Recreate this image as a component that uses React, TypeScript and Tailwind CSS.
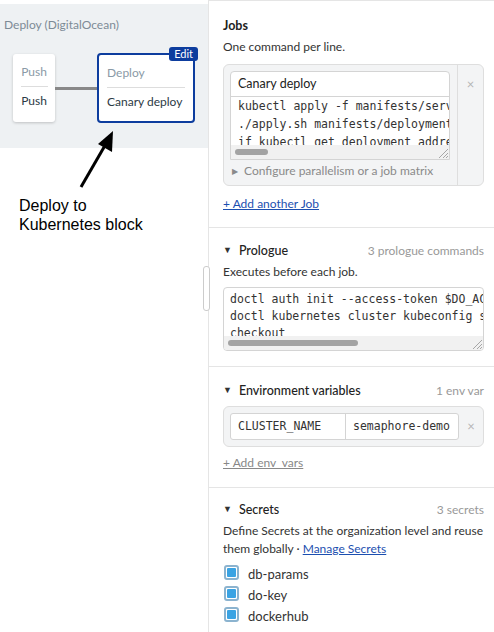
import React from "react";

const ui = "font-['Lato','Noto_Sans',sans-serif]";
const mono = "font-['DejaVu_Sans_Mono','Liberation_Mono',monospace]";

function ResizeGrip() {
  return (
    <svg
      className="absolute right-0 bottom-0"
      width="14"
      height="14"
      viewBox="0 0 14 14"
    >
      <path d="M13 4 L4 13 M13 8 L8 13 M13 11 L11 13" stroke="#a6a6a6" strokeWidth="1" />
    </svg>
  );
}

function FakeScroll({ thumb }: { thumb: string }) {
  return (
    <div className="absolute left-0 right-0 bottom-0 h-[14px] bg-[#f1f1f1]">
      <div className={`absolute left-[4px] top-[4px] h-[6px] rounded-full bg-[#a3a3a3] ${thumb}`} />
    </div>
  );
}

function Caret() {
  return <span className="text-[9px] text-[#333] mr-[7px] relative -top-[1px]">▼</span>;
}

function SectionHead({ title, count }: { title: string; count: string }) {
  return (
    <div className="flex items-center justify-between leading-[18px]">
      <div className="flex items-center text-[12.5px] text-[#222] font-medium">
        <Caret />
        {title}
      </div>
      <span className="text-[12px] text-[#999]">{count}</span>
    </div>
  );
}

function Checkbox({ label }: { label: string }) {
  return (
    <label className="flex items-center gap-[9px] h-[21px]">
      <span className="w-[15px] h-[15px] rounded-[3px] border-[2px] border-[#8bb3cf] bg-white flex items-center justify-center">
        <span className="w-[9px] h-[9px] bg-[#3aa3e3] rounded-[1px]" />
      </span>
      <span className="text-[13px] text-[#333] relative top-[2px]">{label}</span>
    </label>
  );
}

export default function App() {
  return (
    <div className={`${ui} relative flex h-[632px] w-[494px] overflow-hidden bg-white`}>
      {/* canvas */}
      <div className="w-[208px] shrink-0 relative">
        <div className="mt-[4px] h-[144px] bg-[#eef1f3] pl-[4px] pt-[12px]">
          <div className="text-[12px] text-[#7d8b96] leading-[18px]">Deploy (DigitalOcean)</div>
          <div className="flex items-center mt-[19px] ml-[9px]">
            <div className="w-[42px] h-[68px] bg-white rounded-[3px] shadow-[0_1px_3px_rgba(0,0,0,0.2)] flex flex-col items-center pt-[9px]">
              <span className="text-[12px] text-[#8a9aa6] leading-[18px]">Push</span>
              <span className="w-[27px] h-px bg-[#ddd] my-[5px]" />
              <span className="text-[12px] text-[#2b3a45] leading-[18px]">Push</span>
            </div>
            <div className="w-[42px] h-[3px] bg-[#888]" />
            <div className="relative w-[98px] h-[70px] border-[2px] border-[#0d3d9e] rounded-[4px] bg-white px-[8px] pt-[9px]">
              <span className="absolute -top-[8px] -right-[5px] bg-[#0d3d9e] text-white text-[11px] leading-[14px] px-[5px] rounded-[3px]">
                Edit
              </span>
              <div className="text-[12px] text-[#8a9aa6] leading-[18px]">Deploy</div>
              <div className="h-px bg-[#ddd] my-[5px]" />
              <div className="text-[12px] text-[#2b3a45] leading-[18px] whitespace-nowrap">Canary deploy</div>
            </div>
          </div>
        </div>
        <svg className="absolute left-[76px] top-[124px]" width="44" height="66" viewBox="0 0 44 66">
          <line x1="5" y1="63" x2="31" y2="18" stroke="#000" strokeWidth="3" />
          <polygon points="37,7 36,28 22,20" fill="#000" />
        </svg>
        <div className="mt-[48px] pl-[19px] font-['Liberation_Sans',Arial,sans-serif] text-[16px] leading-[19px] text-black">
          Deploy to
          <br />
          Kubernetes block
        </div>
      </div>

      {/* drag handle */}
      <div className="absolute left-[203px] top-[266px] w-[7px] h-[45px] rounded-[3px] border border-[#ccc] bg-white" />

      {/* editor */}
      <div className="flex-1 min-w-0 border-l border-[#e5e5e5] overflow-hidden">
        <div className="border-t border-[#e5e5e5] pl-[14px] pr-[10px] pt-[16px] pb-[14px]">
          <div className="text-[12.5px] font-bold text-[#222] leading-[18px]">Jobs</div>
          <div className="text-[12px] text-[#333] leading-[18px] mt-[3px]">One command per line.</div>
          <div className="mt-[8px] flex rounded-[6px] border border-[#dedede] bg-[#f3f4f5]">
            <div className="flex-1 min-w-0 pl-[6px] pr-[7px] pt-[6px] pb-[5px] border-r border-[#dedede]">
              <div className="rounded-t-[4px] border border-[#d4d4d4] bg-white">
                <div className="h-[25px] flex items-center px-[7px] text-[12.5px] text-[#222] border-b border-[#d4d4d4]">
                  Canary deploy
                </div>
                <div className="relative h-[62px] overflow-hidden">
                  <pre className={`${mono} text-[11.5px] leading-[18px] text-[#333] px-[7px] whitespace-pre`}>
                    {"kubectl apply -f manifests/service.yml\n./apply.sh manifests/deployment.yml\nif kubectl get deployment addressbook"}
                  </pre>
                  <FakeScroll thumb="w-[33px]" />
                  <ResizeGrip />
                </div>
              </div>
              <div className="flex items-center mt-[2px] text-[12px] text-[#8a8a8a] leading-[18px]">
                <span className="text-[8px] ml-[2px] mr-[6px]">▶</span>
                Configure parallelism or a job matrix
              </div>
            </div>
            <div className="w-[25px] shrink-0 flex justify-center pt-[12px] text-[13px] text-[#b5b5b5] leading-[14px]">×</div>
          </div>
          <div className="mt-[9px] text-[12px] text-[#1c4fb0] underline leading-[18px]">+ Add another Job</div>
        </div>

        <div className="border-t border-[#e5e5e5] pl-[14px] pr-[10px] pt-[14px] pb-[15px]">
          <SectionHead title="Prologue" count="3 prologue commands" />
          <div className="text-[12px] text-[#333] leading-[18px] mt-[3px]">Executes before each job.</div>
          <div className="relative mt-[6px] h-[64px] rounded-[4px] border border-[#d4d4d4] bg-white overflow-hidden">
            <pre className={`${mono} text-[11.5px] leading-[17px] text-[#333] px-[6px] pt-[3px] whitespace-pre`}>
              {"doctl auth init --access-token $DO_ACCESS_TOKEN\ndoctl kubernetes cluster kubeconfig save semaphore-demo\ncheckout"}
            </pre>
            <FakeScroll thumb="w-[130px]" />
            <ResizeGrip />
          </div>
        </div>

        <div className="border-t border-[#e5e5e5] pl-[14px] pr-[10px] pt-[15px] pb-[15px]">
          <SectionHead title="Environment variables" count="1 env var" />
          <div className="mt-[6px] flex items-center rounded-[6px] border border-[#dedede] bg-[#f3f4f5] pl-[6px] py-[6px]">
            <div className="flex h-[27px] w-[229px] rounded-[3px] border border-[#d4d4d4] bg-white">
              <div className={`${mono} w-[115px] flex items-center px-[7px] text-[11.5px] text-[#333] border-r border-[#d4d4d4]`}>
                CLUSTER_NAME
              </div>
              <div className={`${mono} flex-1 flex items-center px-[7px] text-[11.5px] text-[#333] overflow-hidden whitespace-nowrap`}>
                semaphore-demo
              </div>
            </div>
            <div className="flex-1 text-center text-[13px] text-[#b5b5b5]">×</div>
          </div>
          <div className="mt-[7px] text-[12px] text-[#888] underline leading-[18px]">+ Add env_vars</div>
        </div>

        <div className="border-t border-[#e5e5e5] pl-[14px] pr-[10px] pt-[13px]">
          <SectionHead title="Secrets" count="3 secrets" />
          <div className="text-[12px] text-[#333] leading-[18px] mt-[3px]">
            Define Secrets at the organization level and reuse them globally ·{" "}
            <span className="text-[#1c4fb0] underline">Manage Secrets</span>
          </div>
          <div className="mt-[4px] flex flex-col pl-[1px]">
            <Checkbox label="db-params" />
            <Checkbox label="do-key" />
            <Checkbox label="dockerhub" />
          </div>
        </div>
      </div>
    </div>
  );
}
